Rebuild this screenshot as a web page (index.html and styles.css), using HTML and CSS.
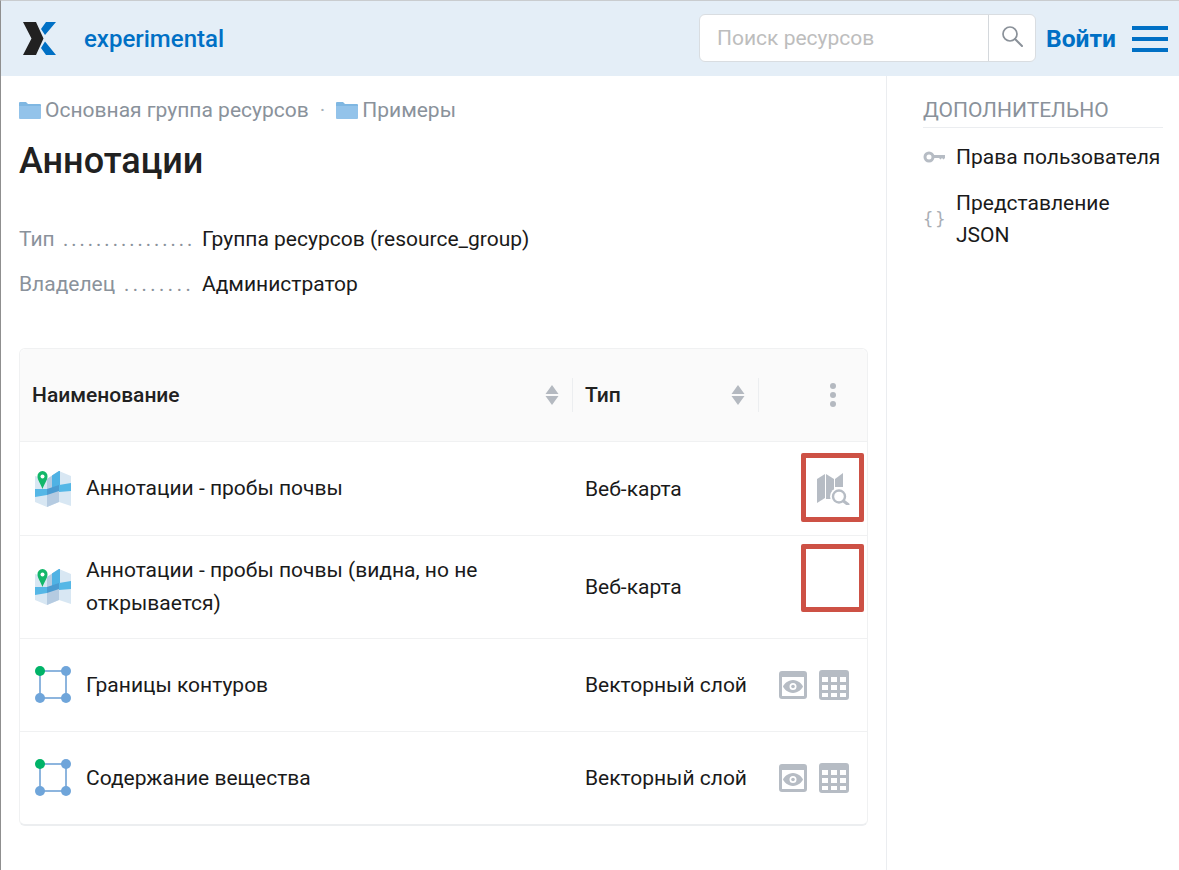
FILE: index.html
```html
<!DOCTYPE html>
<html lang="ru">
<head>
<meta charset="utf-8">
<title>Аннотации</title>
<link rel="stylesheet" href="styles.css">
</head>
<body>
<svg class="defs" width="0" height="0" aria-hidden="true">
  <defs>
    <symbol id="folder" viewBox="0 0 22 18"><path d="M0 2a1 1 0 0 1 1-1h6l2 2h12a1 1 0 0 1 1 1v1H0z" fill="#7fb7e2"/><path d="M0 5h22v12a1 1 0 0 1-1 1H1a1 1 0 0 1-1-1z" fill="#93c3ea"/></symbol>
    <symbol id="map" viewBox="0 0 36 36">
      <path d="M0 5l12 3 12-8 12 5v30l-12-4-12 5-12-5z" fill="#d8e7f3"/>
      <path d="M12 8l12-8v31l-12 5z" fill="#b5cbe1"/>
      <path d="M17 4.500L24 0h1v16l-8 3z" fill="#4fb2e4"/>
      <path d="M0 18h12v6l-12 2z" fill="#55b7e6"/>
      <path d="M12 18l12-4v6l-12 4z" fill="#4a9bd1"/>
      <path d="M24 14l12-2v8l-12 1z" fill="#55b7e6"/>
      <path d="M7.500 0a5 5 0 0 1 5 5.500C12.500 9 9.500 12.500 7.500 18 5.500 12.500 2.500 9 2.500 5.500A5 5 0 0 1 7.500 0z" fill="#12b76a"/>
      <circle cx="7.500" cy="5.500" r="2" fill="#fff"/>
    </symbol>
    <symbol id="poly" viewBox="0 0 36 38">
      <path d="M5 5h26v27H5z" fill="none" stroke="#8db5de" stroke-width="2"/>
      <circle cx="5" cy="5" r="5" fill="#00b368"/>
      <circle cx="31" cy="5" r="5" fill="#6fa5da"/>
      <circle cx="5" cy="32" r="5" fill="#6fa5da"/>
      <circle cx="31" cy="32" r="5" fill="#6fa5da"/>
    </symbol>
    <symbol id="preview" viewBox="0 0 28 28">
      <path fill-rule="evenodd" d="M3 0h22a3 3 0 0 1 3 3v22a3 3 0 0 1-3 3H3a3 3 0 0 1-3-3V3a3 3 0 0 1 3-3zM3 6v19h22V6z" fill="#b6bcc4"/>
      <path fill-rule="evenodd" d="M14 9c5 0 9 4 10 6.500-1 2.500-5 6.500-10 6.500S5 18 4 15.500C5 13 9 9 14 9zm0 3a3.500 3.500 0 1 0 0 7 3.500 3.500 0 0 0 0-7z" fill="#b6bcc4"/>
      <circle cx="14" cy="15.500" r="1.800" fill="#b6bcc4"/>
    </symbol>
    <symbol id="grid" viewBox="0 0 30 30">
      <path fill-rule="evenodd" d="M3 0h24a3 3 0 0 1 3 3v24a3 3 0 0 1-3 3H3a3 3 0 0 1-3-3V3a3 3 0 0 1 3-3zM3 7v5h6V7zm9 0v5h6V7zm9 0v5h6V7zM3 15v5h6v-5zm9 0v5h6v-5zm9 0v5h6v-5zM3 23v4h6v-4zm9 0v4h6v-4zm9 0v4h6v-4z" fill="#b6bcc4"/>
    </symbol>
    <symbol id="sort" viewBox="0 0 14 20"><path d="M7 0l6.500 9H.500zM.500 11h13L7 20z" fill="#b4b9c0"/></symbol>
  </defs>
</svg>

<div class="page">
  <header class="topbar">
    <div class="brand">
      <svg class="logo" viewBox="0 0 33 33" width="33" height="33">
        <path d="M0 0h13l7.500 16.500L13 33H0l8.500-16.500z" fill="#212121"/>
        <path d="M23 0h10L22 13l-4-6zM22 19.500L33 33H23l-5-7z" fill="#0070c5"/>
      </svg>
      <span class="brand-name">experimental</span>
    </div>
    <div class="top-actions">
      <div class="search">
        <span class="search-input">Поиск ресурсов</span>
        <span class="search-btn">
          <svg viewBox="0 0 22 22" width="22" height="22"><circle cx="9" cy="9" r="7" fill="none" stroke="#8a9199" stroke-width="1.700"/><path d="M14 14l7 7" stroke="#8a9199" stroke-width="2" stroke-linecap="round"/></svg>
        </span>
      </div>
      <a class="login">Войти</a>
      <span class="burger"><i></i><i></i><i></i></span>
    </div>
  </header>

  <div class="layout">
    <main class="content">
      <nav class="crumbs">
        <svg class="folder"><use href="#folder"/></svg><span>Основная группа ресурсов</span>
        <span class="dot">·</span>
        <svg class="folder"><use href="#folder"/></svg><span>Примеры</span>
      </nav>
      <h1>Аннотации</h1>

      <dl class="meta">
        <div class="meta-row"><dt class="dt-short">Тип</dt><dd class="leader">................</dd><dd class="val">Группа ресурсов (resource_group)</dd></div>
        <div class="meta-row"><dt class="dt-long">Владелец</dt><dd class="leader wide">........</dd><dd class="val">Администратор</dd></div>
      </dl>

      <section class="table">
        <div class="row head">
          <div class="c-name"><b>Наименование</b><svg class="sort"><use href="#sort"/></svg></div>
          <div class="c-type"><b>Тип</b><svg class="sort"><use href="#sort"/></svg></div>
          <div class="c-act"><span class="kebab"><i></i><i></i><i></i></span></div>
        </div>
        <div class="row r1">
          <div class="c-name"><svg class="ico"><use href="#map"/></svg><span>Аннотации - пробы почвы</span></div>
          <div class="c-type">Веб-карта</div>
          <div class="c-act">
            <svg class="mapview" viewBox="0 0 34 32" width="34" height="32">
              <path d="M1 6l8-5v24l-8 5z" fill="#b6bcc4"/>
              <path d="M10 1l8 5v20H10z" fill="#b6bcc4"/>
              <path d="M19 6l8-6v14H19z" fill="#b6bcc4"/>
              <circle cx="23" cy="23.500" r="9" fill="#fff"/>
              <circle cx="23" cy="23.500" r="6" fill="none" stroke="#b6bcc4" stroke-width="2.400"/>
              <path d="M27.500 28l4.500 3.500" stroke="#b6bcc4" stroke-width="3" stroke-linecap="round"/>
            </svg>
            <span class="mark m1"></span>
          </div>
        </div>
        <div class="row r2">
          <div class="c-name"><svg class="ico"><use href="#map"/></svg><span>Аннотации - пробы почвы (видна, но не открывается)</span></div>
          <div class="c-type">Веб-карта</div>
          <div class="c-act"><span class="mark m2"></span></div>
        </div>
        <div class="row r3">
          <div class="c-name"><svg class="ico"><use href="#poly"/></svg><span>Границы контуров</span></div>
          <div class="c-type">Векторный слой</div>
          <div class="c-act"><svg class="btn-a"><use href="#preview"/></svg><svg class="btn-b"><use href="#grid"/></svg></div>
        </div>
        <div class="row r3">
          <div class="c-name"><svg class="ico"><use href="#poly"/></svg><span>Содержание вещества</span></div>
          <div class="c-type">Векторный слой</div>
          <div class="c-act"><svg class="btn-a"><use href="#preview"/></svg><svg class="btn-b"><use href="#grid"/></svg></div>
        </div>
      </section>
    </main>

    <aside class="side">
      <h2>ДОПОЛНИТЕЛЬНО</h2>
      <div class="side-item">
        <svg viewBox="0 0 22 12" width="22" height="12"><circle cx="6" cy="6" r="4" fill="none" stroke="#b6bcc4" stroke-width="3"/><path d="M10 4h12v3l-1.500 1.500-1.500-1.500-1.500 1.500-1.500-1.500h-6.500z" fill="#b6bcc4"/></svg>
        <span>Права пользователя</span>
      </div>
      <div class="side-item">
        <span class="braces">{}</span>
        <span>Представление JSON</span>
      </div>
    </aside>
  </div>
</div>
</body>
</html>
```
FILE: styles.css
```css
* { box-sizing: border-box; }
html, body { margin: 0; height: 100%; }
body { font-family: Roboto, "Noto Sans", sans-serif; font-size: 21px; color: #1a1a1a; background: #fff; overflow: hidden; }
.defs { position: absolute; }
.page { height: 870px; width: 1179px; border-left: 1px solid #8f8f8f; border-top: 1px solid #c9cccf; display: flex; flex-direction: column; }

.topbar { height: 75px; flex: none; background: #e4eef7; display: flex; align-items: center; justify-content: space-between; padding: 0 11px 0 21px; }
.brand { display: flex; align-items: center; gap: 28px; }
.logo { display: block; margin-left: 1px; margin-top: -1px; }
.brand-name { color: #0070c5; font-size: 24px; font-weight: 500; }
.top-actions { display: flex; align-items: center; }
.search { width: 337px; height: 48px; display: flex; background: #fff; border: 1px solid #d9dde1; border-radius: 6px; margin-top: -1px; }
.search-input { flex: 1; padding-left: 17px; line-height: 46px; color: #bdbdbd; }
.search-btn { width: 47px; border-left: 1px solid #d4d8dc; display: flex; align-items: center; justify-content: center; padding-bottom: 4px; }
.login { color: #0070c5; font-size: 24.600px; font-weight: 700; margin-left: 10px; }
.burger { display: flex; flex-direction: column; gap: 7px; width: 36px; margin-left: 16px; }
.burger i { display: block; height: 4px; background: #0070c5; }

.layout { flex: 1; display: flex; min-height: 0; }
.content { width: 886px; flex: none; border-right: 1px solid #ebedf0; padding: 16px 18px 0 18px; }
.crumbs { display: flex; align-items: center; height: 36px; color: #8a929b; }
.folder { width: 22px; height: 18px; margin-right: 4px; }
.dot { margin: 0 11px; color: #a8b0b8; }
h1 { margin: 10px 0 0; font-size: 36px; line-height: 46px; font-weight: 500; color: #212121; }

.meta { margin: 33px 0 0; }
.meta-row { display: flex; align-items: baseline; height: 45px; line-height: 45px; }
dt { color: #8a929b; flex: none; }
dd { margin: 0; }
.dt-short { width: 44px; }
.dt-long { width: 105px; }
.leader { color: #8a929b; font-size: 20px; letter-spacing: 3px; width: 139px; flex: none; white-space: nowrap; overflow: hidden; }
.leader.wide { letter-spacing: 3.500px; width: 78px; }
.val { color: #1a1a1a; }

.table { margin-top: 41px; width: 849px; border: 1px solid #f0f1f2; border-bottom: 2px solid #eceef0; border-radius: 6px; }
.row { display: flex; align-items: center; border-top: 1px solid #f0f1f2; }
.row.head { height: 92px; background: #fafafa; border-top: 0; border-radius: 6px 6px 0 0; }
.r1 { height: 94px; }
.r2 { height: 103px; }
.r3 { height: 93px; }
.c-name { width: 553px; flex: none; display: flex; align-items: center; padding: 0 12px; }
.c-type { width: 186px; flex: none; padding-left: 12px; display: flex; align-items: center; }
.c-act { flex: 1; display: flex; align-items: center; justify-content: flex-end; position: relative; height: 100%; padding-right: 18px; }
.head > div { height: 34px; }
.head .c-name { justify-content: space-between; padding-right: 13px; border-right: 1px solid #eceef0; }
.head .c-type { justify-content: space-between; padding-right: 13px; border-right: 1px solid #eceef0; }
.head b { font-weight: 500; color: #212121; }
.sort { width: 14px; height: 20px; }
.kebab { display: flex; flex-direction: column; gap: 3px; margin-right: 13px; }
.kebab i { display: block; width: 6px; height: 6px; border-radius: 50%; background: #b4b9c0; }
.ico { width: 36px; height: 38px; flex: none; margin: 0 15px 0 3px; }
.c-name span { line-height: 33px; }
.mark { position: absolute; border: 5px solid #cd5145; border-radius: 2px; width: 63px; height: 69px; right: 3px; }
.m1 { top: 11px; }
.m2 { top: 8px; height: 68px; }
.mapview { margin-right: -1px; margin-top: 0; }
.btn-a { width: 28px; height: 28px; margin-right: 12px; }
.btn-b { width: 30px; height: 30px; }

.side { flex: 1; padding: 16px 16px 0 36px; }
.side h2 { margin: 0; font-size: 21px; font-weight: 400; line-height: 36px; color: #8a929b; height: 35px; border-bottom: 1px solid #ebedf0; box-sizing: content-box; }
.side-item { display: flex; align-items: center; gap: 11px; margin-top: 13px; line-height: 32px; }
.side-item svg { flex: none; }
.side-item:last-child { margin-top: 14px; }
.braces { width: 22px; flex: none; color: #a9aeb5; font-size: 17px; font-family: "DejaVu Sans Mono", monospace; white-space: nowrap; text-align: center; letter-spacing: 2px; }
```
